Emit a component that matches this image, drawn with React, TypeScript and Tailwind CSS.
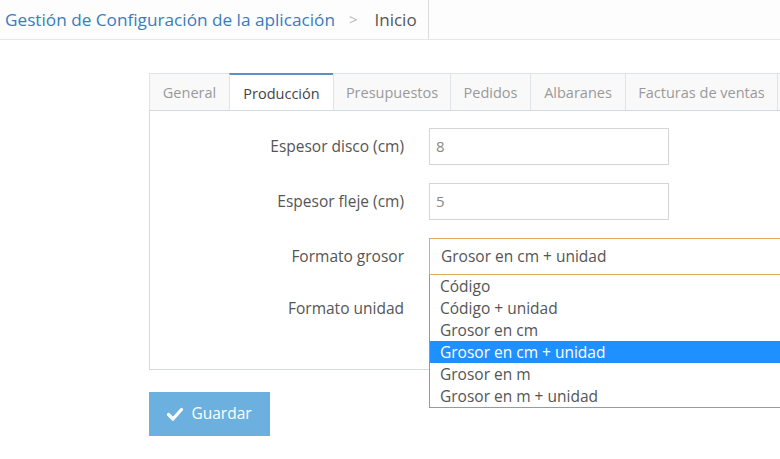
import React from "react";

const tabs: [string, string][] = [
  ["General", "w-[81px]"],
  ["Producción", "w-[105px]"],
  ["Presupuestos", "w-[118px]"],
  ["Pedidos", "w-[81px]"],
  ["Albaranes", "w-[96px]"],
  ["Facturas de ventas", "w-[153px]"],
];
const options = ["Código", "Código + unidad", "Grosor en cm", "Grosor en cm + unidad", "Grosor en m", "Grosor en m + unidad"];

export default function App() {
  return (
    <div className="w-[780px] h-[459px] overflow-hidden bg-white text-[15.5px] text-[#555]" style={{ fontFamily: '"Open Sans", sans-serif' }}>
      <div className="h-[40px] border-b border-[#e7e7e7] bg-[#fdfdfd] flex items-stretch">
        <div className="flex items-center pl-[5px] pr-[11px] border-r border-[#dcdcdc]">
          <span className="text-[17.2px] text-[#3a7bbf]">Gestión de Configuración de la aplicación</span>
          <span className="text-[#bbb] text-[15px] ml-[14px] mr-[17px]">&gt;</span>
          <span className="text-[17px] text-[#555]">Inicio</span>
        </div>
      </div>
      <div className="pl-[149px] pt-[33px]">
        <div className="flex h-[38px]">
          {tabs.map(([t, w], i) => (
            <div
              key={t}
              className={
                i === 1
                  ? `${w} shrink-0 pt-[2px] -ml-px flex items-center justify-center bg-white border-x border-[#dfe3ea] border-t-2 border-t-[#5b8fc7] text-[#444] text-[14.5px] whitespace-nowrap`
                  : `${w} shrink-0 pt-[2px] -ml-px first:ml-0 flex items-center justify-center bg-[#f9f9f9] border border-[#dfe3ea] text-[#999] text-[14.5px] whitespace-nowrap`
              }
            >
              {t}
            </div>
          ))}
          <div className="-ml-px w-[20px] shrink-0 bg-[#f9f9f9] border border-[#dfe3ea]" />
        </div>
        <div className="relative border border-[#d5d9e0] -mt-px h-[260px] border-r-0">
          <div className="pt-[17px] flex flex-col gap-[18px]">
            {["Espesor disco (cm)", "Espesor fleje (cm)"].map((l, i) => (
              <div key={l} className="flex items-center h-[37px]">
                <div className="w-[254px] text-right text-[#555]">{l}</div>
                <div className="ml-[25px] w-[240px] h-[37px] border border-[#d5d5d5] flex items-center pl-[6px] text-[#888] text-[15px]">{i === 0 ? "8" : "5"}</div>
              </div>
            ))}
            <div className="flex items-center h-[37px]">
              <div className="w-[254px] text-right text-[#555]">Formato grosor</div>
            </div>
            <div className="flex items-center h-[37px] -mt-[3px]">
              <div className="w-[254px] text-right text-[#555]">Formato unidad</div>
            </div>
          </div>
          <div className="absolute left-[279px] top-[127px] w-[360px]">
            <div className="h-[37px] border border-[#e8a665] flex items-center pl-[11px] text-[#555] bg-white">Grosor en cm + unidad</div>
            <div className="border border-[#8e9aad] border-t-0 bg-white">
              {options.map((o, i) => (
                <div
                  key={o}
                  className={
                    i === 3
                      ? "h-[22px] leading-[22px] pl-[10px] bg-[#1e90ff] text-white"
                      : "h-[22px] leading-[22px] pl-[10px] text-[#555]"
                  }
                >
                  {o}
                </div>
              ))}
            </div>
          </div>
        </div>
        <div className="mt-[22px] w-[121px] h-[44px] bg-[#6cb0e0] text-white flex items-center justify-center gap-[8px] text-[15.5px]">
          <svg width="16" height="14" viewBox="0 0 16 14"><path d="M1.5 7.5 L6 12 L14.5 2.5" stroke="white" strokeWidth="3.2" fill="none" strokeLinecap="round" strokeLinejoin="round" /></svg>
          <span>Guardar</span>
        </div>
      </div>
    </div>
  );
}
